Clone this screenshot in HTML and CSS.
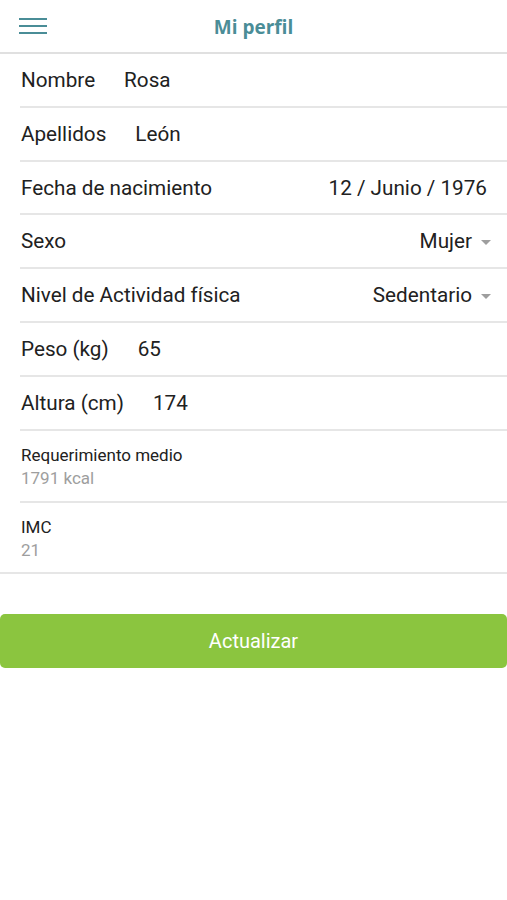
FILE: index.html
```html
<!DOCTYPE html>
<html>
	<head>
		<meta charset="utf-8" />
		<title>Mi perfil</title>
		<link rel="stylesheet" href="styles.css">
	</head>
	<body>
		<div class="header">
			<div class="menu">
				<svg width="28" height="18" viewBox="0 0 28 18">
					<path d="M0 2H28M0 9H28M0 16H28" stroke="#4a8d97" stroke-width="2.2" fill="none"/>
				</svg>
			</div>
			<h1 class="title">Mi perfil</h1>
		</div>
		<div class="form">
			<div class="row">
				<span class="label">Nombre</span>
				<span class="value">Rosa</span>
			</div>
			<div class="row">
				<span class="label">Apellidos</span>
				<span class="value">León</span>
			</div>
			<div class="row spread short">
				<span class="label">Fecha de nacimiento</span>
				<span class="value">12 / Junio / 1976</span>
			</div>
			<div class="row spread select">
				<span class="label">Sexo</span>
				<span class="value">Mujer<i class="arrow"></i></span>
			</div>
			<div class="row spread select">
				<span class="label">Nivel de Actividad física</span>
				<span class="value">Sedentario<i class="arrow"></i></span>
			</div>
			<div class="row">
				<span class="label">Peso (kg)</span>
				<span class="value">65</span>
			</div>
			<div class="row">
				<span class="label">Altura (cm)</span>
				<span class="value">174</span>
			</div>
			<div class="info">
				<div class="info-label">Requerimiento medio</div>
				<div class="info-value">1791 kcal</div>
			</div>
			<div class="info last">
				<div class="info-label">IMC</div>
				<div class="info-value">21</div>
			</div>
		</div>
		<button class="btn">Actualizar</button>
	</body>
</html>
```

FILE: styles.css
```css
*{
	padding: 0;
	margin: 0;
	box-sizing: border-box;
}
body{
	width: 507px;
	background: #fff;
	font-family: Roboto, "Liberation Sans", sans-serif;
	color: #212121;
}
.header{
	height: 54px;
	border-bottom: 2px solid #e0e0e0;
	display: flex;
	align-items: center;
	position: relative;
}
.menu{
	padding-left: 19px;
	display: flex;
}
.title{
	position: absolute;
	left: 0;
	right: 0;
	top: 14px;
	text-align: center;
	font-family: "Open Sans", sans-serif;
	font-weight: 700;
	font-size: 19px;
	line-height: 26px;
	color: #4a8d97;
	pointer-events: none;
}
.form{
	padding-left: 20px;
}
.row{
	height: 54px;
	border-bottom: 2px solid #e6e6e6;
	display: flex;
	align-items: center;
	gap: 29px;
	font-size: 20.7px;
	padding-left: 1px;
}
.row.short{
	height: 53px;
}
.row.spread{
	justify-content: space-between;
	padding-right: 20px;
}
.row.select{
	padding-right: 16px;
}
.value{
	display: flex;
	align-items: center;
}
.arrow{
	width: 0;
	height: 0;
	border-left: 5px solid transparent;
	border-right: 5px solid transparent;
	border-top: 5px solid #9e9e9e;
	margin-left: 9px;
	margin-top: 2px;
}
.info{
	height: 72px;
	border-bottom: 2px solid #e6e6e6;
	padding: 13px 0 0 1px;
	font-size: 17px;
}
.info.last{
	height: 71px;
	margin-left: -20px;
	padding-left: 21px;
}
.info-label{
	line-height: 22px;
}
.info-value{
	line-height: 24px;
	color: #9e9e9e;
}
.btn{
	display: block;
	width: 507px;
	height: 54px;
	margin-top: 40px;
	border: none;
	border-radius: 5px;
	background: #8bc53f;
	color: #fff;
	font-family: Roboto, "Liberation Sans", sans-serif;
	font-size: 20px;
}
```
